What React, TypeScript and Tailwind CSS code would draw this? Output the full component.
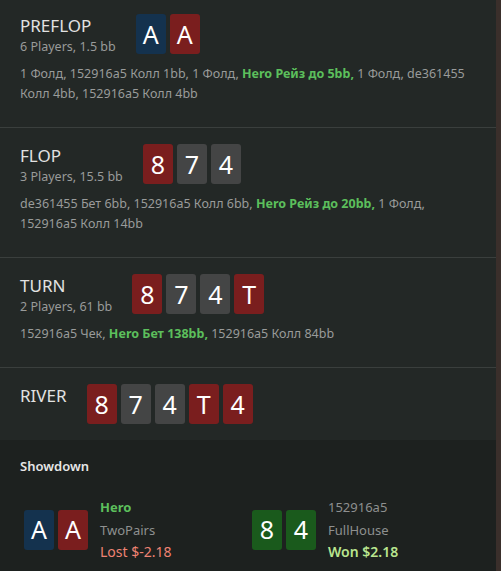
import React from "react";

type Suit = "r" | "b" | "g" | "k";

const SUIT_BG: Record<Suit, string> = {
  r: "bg-[#7a1e1e]",
  b: "bg-[#14324e]",
  g: "bg-[#444545]",
  k: "bg-[#1a5a1c]",
};

function Card({ rank, suit }: { rank: string; suit: Suit }) {
  return (
    <div
      className={`${SUIT_BG[suit]} flex h-10 w-[30px] items-center justify-center rounded-[3px] text-[25px] leading-none text-white`}
    >
      {rank}
    </div>
  );
}

function Cards({ cards }: { cards: [string, Suit][] }) {
  return (
    <div className="flex gap-1">
      {cards.map(([rank, suit], i) => (
        <Card key={i} rank={rank} suit={suit} />
      ))}
    </div>
  );
}

function Street({
  title,
  info,
  cards,
  children,
  first,
  last,
}: {
  title: string;
  info?: string;
  cards: [string, Suit][];
  children?: React.ReactNode;
  first?: boolean;
  last?: boolean;
}) {
  return (
    <section
      className={`px-5 ${first ? "pt-[14px]" : "pt-4"} ${
        last ? "pb-4" : "border-b border-[#3a3f3d] pb-[23px]"
      }`}
    >
      <div className="flex h-10 items-start gap-5">
        <div className="pt-px">
          <div className="text-[17px] leading-[22px] text-[#e2e2e2]">{title}</div>
          {info ? <div className="text-[12.5px] leading-5 text-[#999b9a]">{info}</div> : null}
        </div>
        <Cards cards={cards} />
      </div>
      {children ? (
        <p className="mt-[10px] text-[12.5px] leading-5 text-[#999b9a]">{children}</p>
      ) : null}
    </section>
  );
}

function Hero({ children }: { children: React.ReactNode }) {
  return <span className="font-bold text-[#5cbf5c]">{children}</span>;
}

function Player({
  name,
  isHero,
  hand,
  result,
  won,
  cards,
}: {
  name: string;
  isHero?: boolean;
  hand: string;
  result: string;
  won?: boolean;
  cards: [string, Suit][];
}) {
  return (
    <div className="flex items-center gap-3 pl-1">
      <Cards cards={cards} />
      <div className="text-[13px] leading-[22.5px]">
        <div className={isHero ? "font-bold text-[#5cbf5c]" : "text-[#8e908f]"}>{name}</div>
        <div className="text-[#8e908f]">{hand}</div>
        <div className={`text-[14px] ${won ? "font-semibold text-[#b9e68f]" : "text-[#ef8373]"}`}>{result}</div>
      </div>
    </div>
  );
}

export default function App() {
  return (
    <div
      className="flex h-[571px] w-[501px] overflow-hidden bg-[#232826]"
      style={{ fontFamily: '"Noto Sans", "Open Sans", sans-serif' }}
    >
      <div className="flex min-w-0 flex-1 flex-col">
        <Street
          first
          title="PREFLOP"
          info="6 Players, 1.5 bb"
          cards={[
            ["A", "b"],
            ["A", "r"],
          ]}
        >
          1 Фолд, 152916a5 Колл 1bb, 1 Фолд, <Hero>Hero Рейз до 5bb,</Hero> 1 Фолд, de361455 Колл 4bb,
          152916a5 Колл 4bb
        </Street>
        <Street
          title="FLOP"
          info="3 Players, 15.5 bb"
          cards={[
            ["8", "r"],
            ["7", "g"],
            ["4", "g"],
          ]}
        >
          de361455 Бет 6bb, 152916a5 Колл 6bb, <Hero>Hero Рейз до 20bb,</Hero> 1 Фолд, 152916a5 Колл
          14bb
        </Street>
        <Street
          title="TURN"
          info="2 Players, 61 bb"
          cards={[
            ["8", "r"],
            ["7", "g"],
            ["4", "g"],
            ["T", "r"],
          ]}
        >
          152916a5 Чек, <Hero>Hero Бет 138bb,</Hero> 152916a5 Колл 84bb
        </Street>
        <Street
          last
          title="RIVER"
          cards={[
            ["8", "r"],
            ["7", "g"],
            ["4", "g"],
            ["T", "r"],
            ["4", "r"],
          ]}
        />
        <section className="flex-1 bg-[#1d211f] px-5 pt-4">
          <h2 className="text-[13px] font-semibold leading-5 text-[#e6e6e6]">Showdown</h2>
          <div className="mt-5 grid grid-cols-2">
            <Player
              name="Hero"
              isHero
              hand="TwoPairs"
              result="Lost $-2.18"
              cards={[
                ["A", "b"],
                ["A", "r"],
              ]}
            />
            <Player
              name="152916a5"
              hand="FullHouse"
              result="Won $2.18"
              won
              cards={[
                ["8", "k"],
                ["4", "k"],
              ]}
            />
          </div>
        </section>
      </div>
      <div className="w-[5px] shrink-0 bg-[#3a2f2b]" />
    </div>
  );
}
